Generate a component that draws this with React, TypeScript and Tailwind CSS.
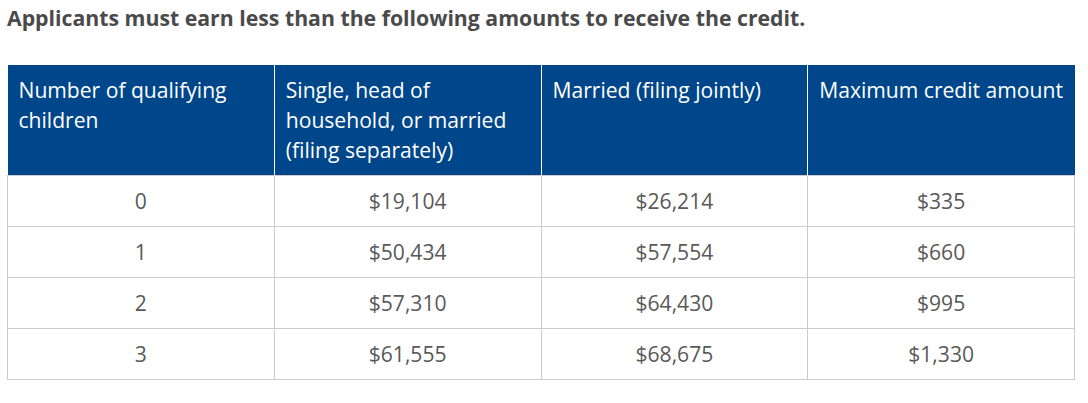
const rows = [
  ["0", "$19,104", "$26,214", "$335"],
  ["1", "$50,434", "$57,554", "$660"],
  ["2", "$57,310", "$64,430", "$995"],
  ["3", "$61,555", "$68,675", "$1,330"],
];

const headers = [
  "Number of qualifying children",
  "Single, head of household, or married (filing separately)",
  "Married (filing jointly)",
  "Maximum credit amount",
];

export default function App() {
  return (
    <div className="bg-white w-[1088px] h-[403px] pl-[7px] pt-[3px]" style={{ fontFamily: '"Open Sans", sans-serif' }}>
      <h2 className="text-[21.25px] leading-[30px] font-bold text-[#4a4a4a]">
        Applicants must earn less than the following amounts to receive the credit.
      </h2>
      <table className="mt-[32px] w-[1068px] table-fixed border-collapse text-[21.1px] leading-[30px]">
        <thead>
          <tr className="bg-[#00468b] text-white">
            {headers.map((h, i) => (
              <th
                key={h}
                className={`text-left font-normal align-top px-[11px] py-[10px] ${i < 3 ? "border-r border-white" : ""}`}
              >
                {h}
              </th>
            ))}
          </tr>
        </thead>
        <tbody>
          {rows.map((r) => (
            <tr key={r[0]} className="text-[#595959]">
              {r.map((c, j) => (
                <td key={j} className="border border-[#cccccc] text-center px-[11px] py-[10px]">
                  {c}
                </td>
              ))}
            </tr>
          ))}
        </tbody>
      </table>
    </div>
  );
}
